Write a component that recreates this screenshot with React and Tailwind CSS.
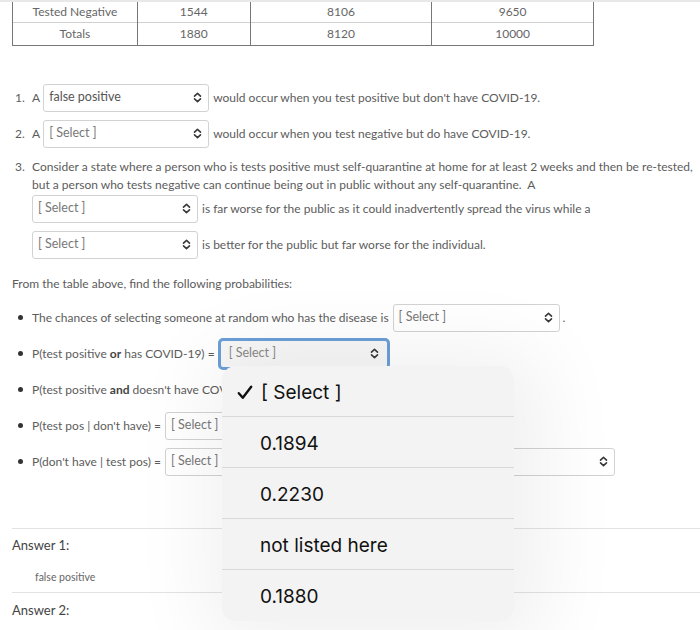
import React from "react";

const Chevron = () => (
  <svg width="9" height="11" viewBox="0 0 9 11" fill="none" stroke="#3a3a3a" strokeWidth="1.6" strokeLinecap="round" strokeLinejoin="round">
    <path d="M1.5 4.2 L4.5 1.4 L7.5 4.2" />
    <path d="M1.5 6.8 L4.5 9.6 L7.5 6.8" />
  </svg>
);

const Select = ({ value = "[ Select ]", w = "w-[166px]", dark = false }) => (
  <div
    className={`${w} h-[28px] shrink-0 flex items-center justify-between pl-[5px] pr-[6px] border border-[#d2d2d2] rounded-[3px] bg-white`}
  >
    <span className={`-mt-[1px] text-[12.5px] ${dark ? "text-[#555]" : "text-[#777]"}`}>{value}</span>
    <Chevron />
  </div>
);

const Bullet = ({ children }) => (
  <div className="flex items-center h-[28px]">
    <span className="w-[20px] flex justify-start pl-[6px] shrink-0">
      <span className="w-[5px] h-[5px] rounded-full bg-[#333]" />
    </span>
    {children}
  </div>
);

const options = ["0.1894", "0.2230", "not listed here", "0.1880"];

const App = () => {
  return (
    <div className="relative w-[700px] h-[630px] overflow-hidden bg-white font-['Lato',sans-serif] text-[12px] leading-[18px] text-[#5c5c5c]">
      {/* top edge of the table card */}
      <div className="h-[2px] bg-[#e8e8e8]" />

      {/* Table */}
      <table className="ml-[12px] w-[582px] border-collapse text-center text-[#666]">
        <tbody>
          <tr className="h-[20px] border-b border-[#d0d0d0]">
            <td className="w-[125px] border-l border-r border-[#777]">Tested Negative</td>
            <td className="w-[113px] border-r border-[#777]">1544</td>
            <td className="w-[182px] border-r border-[#777]">8106</td>
            <td className="w-[162px] border-r border-[#777]">9650</td>
          </tr>
          <tr className="h-[23px] border-b border-[#777]">
            <td className="border-l border-r border-[#777]">Totals</td>
            <td className="border-r border-[#777]">1880</td>
            <td className="border-r border-[#777]">8120</td>
            <td className="border-r border-[#777]">10000</td>
          </tr>
        </tbody>
      </table>

      {/* Questions */}
      <div className="mt-[38px] pl-[12px] pr-[4px]">
        <div className="flex items-center h-[28px]">
          <span className="w-[20px] pl-[3px] shrink-0">1.</span>
          <span className="mr-[3px]">A</span>
          <Select value="false positive" dark />
          <span className="ml-[4px]">would occur when you test positive but don't have COVID-19.</span>
        </div>
        <div className="flex items-center h-[28px] mt-[8px]">
          <span className="w-[20px] pl-[3px] shrink-0">2.</span>
          <span className="mr-[3px]">A</span>
          <Select />
          <span className="ml-[4px]">would occur when you test negative but do have COVID-19.</span>
        </div>
        <div className="flex mt-[10px]">
          <span className="w-[20px] pl-[3px] shrink-0">3.</span>
          <div className="flex flex-col">
            <p>
              Consider a state where a person who is tests positive must self-quarantine at home for at least 2 weeks and then be re-tested,
              but a person who tests negative can continue being out in public without any self-quarantine.&nbsp; A
            </p>
            <div className="flex items-center mt-[1px]">
              <Select />
              <span className="ml-[4px]">is far worse for the public as it could inadvertently spread the virus while a</span>
            </div>
            <div className="flex items-center mt-[8px]">
              <Select />
              <span className="ml-[4px]">is better for the public but far worse for the individual.</span>
            </div>
          </div>
        </div>

        <p className="mt-[16px]">From the table above, find the following probabilities:</p>

        <div className="mt-[11px] flex flex-col gap-[8px]">
          <Bullet>
            <span className="mr-[4px]">The chances of selecting someone at random who has the disease is</span>
            <Select w="w-[167px]" />
            <span className="ml-[3px]">.</span>
          </Bullet>
          <Bullet>
            <span className="mr-[3px]">P(test positive <b className="font-bold text-[#444]">or</b> has COVID-19) =</span>
            <div className="w-[172px] h-[32px] shrink-0 -my-[2px] flex items-center justify-between pl-[8px] pr-[8px] border-[3px] border-[#6b9fd8] rounded-[5px] bg-[#f7f7f7]">
              <span className="-mt-[1px] text-[12.5px] text-[#888]">[ Select ]</span>
              <Chevron />
            </div>
          </Bullet>
          <Bullet>
            <span className="mr-[4px]">P(test positive <b className="font-bold text-[#444]">and</b> doesn't have COVID-19) =</span>
            <Select w="w-[170px]" />
          </Bullet>
          <Bullet>
            <span className="mr-[4px]">P(test pos | don't have) =</span>
            <Select w="w-[200px]" />
          </Bullet>
          <Bullet>
            <span className="mr-[4px]">P(don't have | test pos) =</span>
            <Select w="w-[450px]" />
          </Bullet>
        </div>
      </div>

      {/* Answers */}
      <div className="mt-[52px] ml-[12px] border-t border-[#e3e3e3]">
        <p className="mt-[7px] text-[#444] text-[13px]">Answer 1:</p>
        <p className="mt-[14px] ml-[23px] text-[10.5px] text-[#666]">false positive</p>
        <div className="mt-[6px] border-t border-[#e3e3e3]" />
        <p className="mt-[8px] text-[#444] text-[13px]">Answer 2:</p>
      </div>

      {/* iOS style option picker */}
      <div className="absolute left-[222px] top-[366px] w-[292px] rounded-[14px] bg-[#f3f3f3] shadow-[8px_6px_80px_24px_rgba(0,0,0,0.06)] font-['Inter',sans-serif] text-[19px] text-[#111] overflow-hidden">
        <div className="h-[51px] pt-[3px] flex items-center border-b border-[#d8d8d8]">
          <span className="w-[39px] pl-[15px] flex">
            <svg width="16" height="15" viewBox="0 0 16 15" fill="none" stroke="#111" strokeWidth="2.4" strokeLinecap="round" strokeLinejoin="round">
              <path d="M1.8 8.2 L5.8 12.8 L14.2 1.8" />
            </svg>
          </span>
          <span>[ Select ]</span>
        </div>
        {options.map((o, i) => (
          <div
            key={o}
            className={`h-[51px] pt-[3px] flex items-center pl-[38px] ${i < options.length - 1 ? "border-b border-[#d8d8d8]" : ""}`}
          >
            {o}
          </div>
        ))}
      </div>
    </div>
  );
};

export default App;
